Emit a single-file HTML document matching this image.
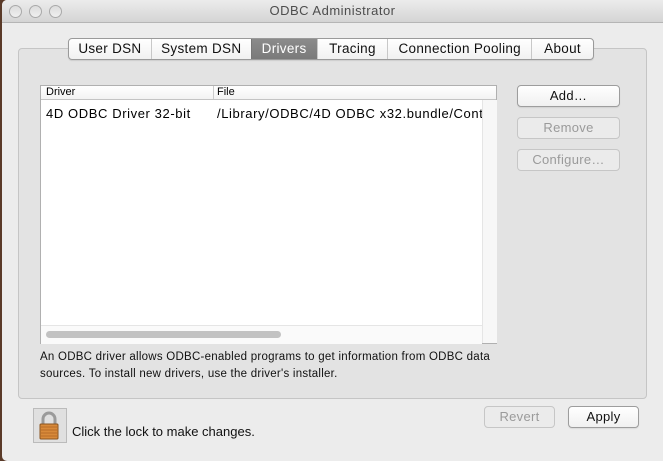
<!DOCTYPE html>
<html><head><style>
body{margin:0;width:663px;height:461px;overflow:hidden;background:#5a3a28;font-family:"Liberation Sans",sans-serif;}
.win{position:absolute;left:2px;top:0;width:661px;height:461px;background:#ececec;border-radius:5px 0 0 5px;overflow:hidden}
.title{height:22px;background:linear-gradient(#ececec,#d4d4d4);border-bottom:1px solid #b5b5b5;text-align:center;font-size:13px;color:#4d4d4d;line-height:22px;letter-spacing:0.5px}
.dot{position:absolute;top:5px;width:11px;height:11px;border-radius:50%;border:1px solid #a9a9a9;background:linear-gradient(#dcdcdc,#f0f0f0)}
.abs{position:absolute}
.group{left:16px;top:48px;width:627px;height:349px;border:1px solid #c5c5c5;border-radius:4px;background:#e3e3e3}
.tabs{left:66px;top:38px;height:20px;width:524px;border:1px solid #9a9a9a;border-radius:4px;background:linear-gradient(#fff,#f1f1f1);display:flex;font-size:13.5px;overflow:hidden;box-shadow:0 1px 1px rgba(0,0,0,.1)}
.tabs div{line-height:20px;border-left:1px solid #c8c8c8;color:#111;text-align:center;letter-spacing:0.3px}
.tabs div:first-child{border-left:none}
.tabs .sel{background:linear-gradient(#8b8b8b,#7a7a7a);color:#fff;border-left:1px solid #777}
.table{left:38px;top:85px;width:455px;height:257px;border:1px solid #b0b0b0;background:#fff}
.hdr{height:13px;border-bottom:1px solid #c4c4c4;font-size:11px;line-height:13px;background:linear-gradient(#fff,#f3f3f3)}
.btn{height:20px;border:1px solid #9d9d9d;border-radius:4px;background:linear-gradient(#fff,#f0f0f0);font-size:13px;text-align:center;line-height:20px;color:#111;box-shadow:0 1px 1px rgba(0,0,0,.08);letter-spacing:0.3px}
.dis{color:#9a9a9a;border-color:#c6c6c6;background:#ebebeb;box-shadow:none}
</style></head><body>
<div class="win">
<div class="title">ODBC Administrator</div>
<div class="dot" style="left:7px"></div><div class="dot" style="left:27px"></div><div class="dot" style="left:47px"></div>
<div class="abs group"></div>
<div class="abs tabs"><div style="width:82px">User DSN</div><div style="width:99px">System DSN</div><div class="sel" style="width:65px">Drivers</div><div style="width:70px">Tracing</div><div style="width:143px">Connection Pooling</div><div style="width:61px">About</div></div>
<div class="abs table">
<div class="hdr"><span class="abs" style="left:5px">Driver</span><span class="abs" style="left:172px;top:0;height:13px;border-left:1px solid #ccc;padding-left:3px">File</span></div>
<div style="position:absolute;top:20px;left:5px;font-size:13px;white-space:nowrap;width:436px;overflow:hidden;letter-spacing:0.6px">4D ODBC Driver 32-bit<span style="position:absolute;left:171px">/Library/ODBC/4D ODBC x32.bundle/Contents</span></div>
<div class="abs" style="left:441px;top:14px;width:14px;height:243px;background:#f7f7f7;border-left:1px solid #e5e5e5"></div>
<div class="abs" style="left:0;top:239px;width:441px;height:18px;background:#fafafa;border-top:1px solid #e5e5e5"></div>
<div class="abs" style="left:5px;top:245px;width:235px;height:7px;border-radius:4px;background:#c2c2c2"></div>
</div>
<div class="abs btn" style="left:515px;top:85px;width:101px">Add…</div>
<div class="abs btn dis" style="left:515px;top:117px;width:101px">Remove</div>
<div class="abs btn dis" style="left:515px;top:149px;width:101px">Configure…</div>
<div class="abs" style="left:38px;top:349px;font-size:11.5px;line-height:17px;color:#111;letter-spacing:0.25px;white-space:nowrap">An ODBC driver allows ODBC-enabled programs to get information from ODBC data<br>sources. To install new drivers, use the driver's installer.</div>
<div class="abs btn dis" style="left:482px;top:406px;width:69px">Revert</div>
<div class="abs btn" style="left:566px;top:406px;width:69px">Apply</div>
<div class="abs" style="left:31px;top:408px;width:32px;height:33px;border:1px solid #bbb;background:#e0e0e0"></div>
<svg class="abs" style="left:35px;top:410px" width="24" height="30"><path d="M6 14V9a6 6 0 0 1 12 0v5" fill="none" stroke="#9a9a9a" stroke-width="3"/><rect x="3" y="14" width="18" height="15" rx="1" fill="#d88a3a" stroke="#8a5420"/><g stroke="#b86c28"><line x1="4" y1="17" x2="20" y2="17"/><line x1="4" y1="20" x2="20" y2="20"/><line x1="4" y1="23" x2="20" y2="23"/><line x1="4" y1="26" x2="20" y2="26"/></g></svg>
<div class="abs" style="left:70px;top:424px;font-size:13px;color:#111">Click the lock to make changes.</div>
</div>
</body></html>
